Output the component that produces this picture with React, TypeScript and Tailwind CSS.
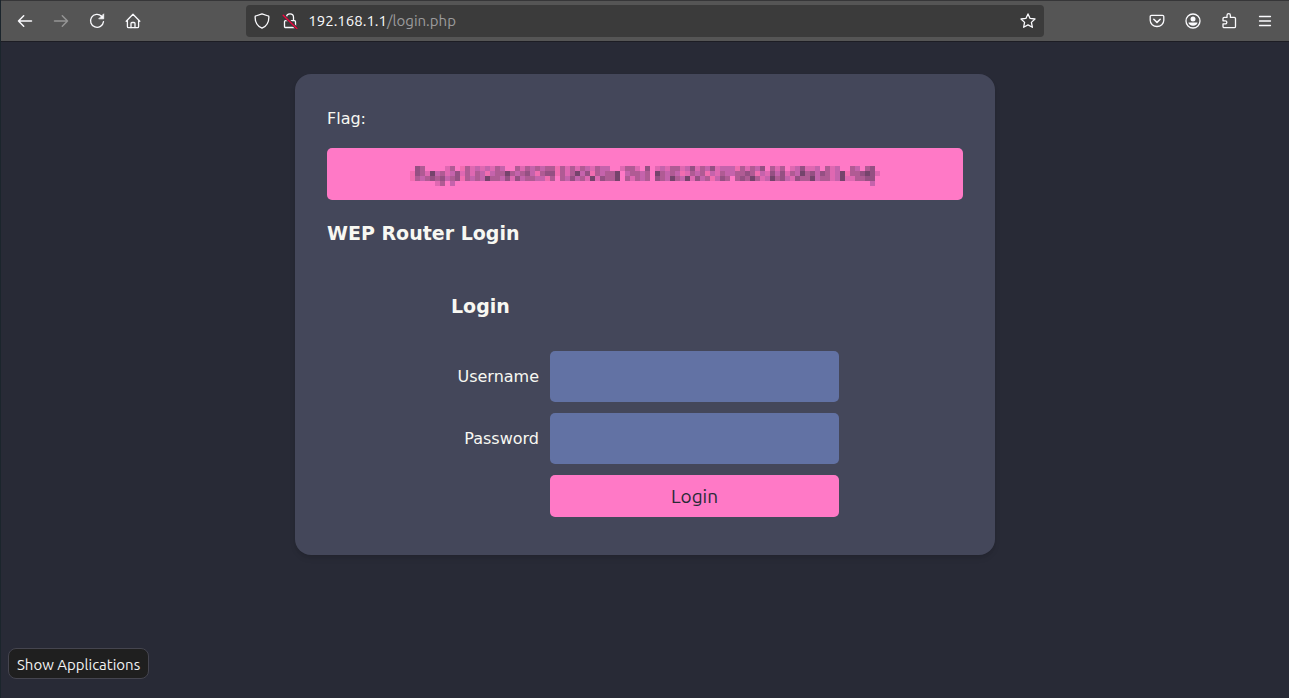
import type { ReactNode } from "react";

function Icon({ children, className = "" }: { children: ReactNode; className?: string }) {
  return (
    <svg
      viewBox="0 0 16 16"
      className={`size-4 shrink-0 ${className}`}
      fill="none"
      stroke="currentColor"
      strokeWidth="1.3"
      strokeLinecap="round"
      strokeLinejoin="round"
      aria-hidden="true"
    >
      {children}
    </svg>
  );
}

function ToolButton({ label, disabled, children }: { label: string; disabled?: boolean; children: ReactNode }) {
  return (
    <button
      type="button"
      aria-label={label}
      disabled={disabled}
      className="flex h-8 w-9 items-center justify-center text-[#fbfbfe] disabled:text-[#959595]"
    >
      {children}
    </button>
  );
}

function Toolbar() {
  return (
    <header className="flex h-[42px] items-center border-t border-b border-t-[#363638] border-b-[#1d1d24] bg-[#555555] px-[6px]">
      <nav className="flex flex-1" aria-label="Navigation">
        <ToolButton label="Back">
          <Icon><path d="M14.5 8H1.5M6.7 2.8 1.5 8l5.2 5.2" strokeWidth="1.5" /></Icon>
        </ToolButton>
        <ToolButton label="Forward" disabled>
          <Icon><path d="M1.5 8h13M9.3 2.8 14.5 8l-5.2 5.2" strokeWidth="1.5" /></Icon>
        </ToolButton>
        <ToolButton label="Reload">
          <Icon>
            <path d="M12.6 3.2A6.5 6.5 0 1 0 14.5 8.6" />
            <path d="M14.7 1.2v4.6h-4.6z" fill="currentColor" strokeWidth="0.8" />
          </Icon>
        </ToolButton>
        <ToolButton label="Home">
          <Icon>
            <path d="M1.2 8.2 8 1.3l6.8 6.9M2.4 7.3v6.2c0 .7.5 1.2 1.2 1.2h8.800c.7 0 1.200-.5 1.200-1.200V7.300" />
            <path d="M6 14.500v-4c0-.6.4-1 1-1h2c.6 0 1 .4 1 1v4" />
          </Icon>
        </ToolButton>
      </nav>
      <div className="flex h-8 w-[62.5%] items-center rounded bg-[#3b3b3b] px-2 text-[#fbfbfe]">
        <Icon>
          <path d="M8 .9 14.3 3c.4.1.6.5.6.9 0 5.4-2.2 9.2-6.9 11.2C3.3 13.1 1.1 9.3 1.1 3.9c0-.4.2-.8.6-.9z" />
        </Icon>
        <Icon className="mr-[10px] ml-3">
          <path d="M4.500 4.200a3.500 3.300 0 0 1 7 0V7M3.600 7.600h8.800c.6 0 1.100.5 1.100 1.100v4.700c0 .6-.5 1.100-1.100 1.100H3.600c-.6 0-1.100-.5-1.100-1.100V8.700c0-.6.5-1.100 1.100-1.100z" />
          <path d="M1.200 2.200 14.800 15.400" stroke="#3b3b3b" strokeWidth="3" />
          <path d="M1.200 2.200 14.800 15.400" stroke="#f0043f" strokeWidth="1.4" />
        </Icon>
        <div className="flex-1 font-['Ubuntu','Noto_Sans',sans-serif] text-[15px] leading-6">
          192.168.1.1<span className="text-[#9b9b9d]">/login.php</span>
        </div>
        <button type="button" aria-label="Bookmark this page">
          <Icon>
            <path d="m8 .9 2.100 4.500 4.900.6-3.600 3.400 1 4.900L8 11.900l-4.400 2.400 1-4.900L1 6l4.900-.6z" />
          </Icon>
        </button>
      </div>
      <div className="flex flex-1 justify-end">
        <ToolButton label="Save to Pocket">
          <Icon>
            <path d="M2.500 2.300h11c.7 0 1.300.5 1.300 1.200v3.700a6.800 6.300 0 0 1-13.600 0V3.500c0-.7.600-1.200 1.300-1.200z" />
            <path d="M4.800 6.300 8 9.400l3.200-3.100" strokeWidth="1.500" />
          </Icon>
        </ToolButton>
        <ToolButton label="Account">
          <Icon>
            <circle cx="8" cy="8" r="7" />
            <circle cx="8" cy="6" r="2.500" fill="currentColor" stroke="none" />
            <path d="M3.500 9.500h9c0 1.800-2 3.300-4.500 3.300s-4.500-1.500-4.500-3.300z" fill="currentColor" stroke="none" />
          </Icon>
        </ToolButton>
        <ToolButton label="Extensions">
          <Icon>
            <path d="M6 4.400V2.400a1.700 1.700 0 0 1 3.400 0v2h3.900c.7 0 1.200.5 1.200 1.200v7.900c0 .7-.5 1.200-1.200 1.200H3.200c-.7 0-1.200-.5-1.200-1.200v-2.600h2.300a1.500 1.500 0 0 0 0-3.100H2V5.600c0-.7.500-1.200 1.200-1.200z" />
          </Icon>
        </ToolButton>
        <ToolButton label="Open application menu">
          <Icon><path d="M2.500 3.500h11M2.500 8h11M2.500 12.500h11" /></Icon>
        </ToolButton>
      </div>
    </header>
  );
}

const shades: Record<string, string> = {
  a: "#f16db1",
  b: "#df68b2",
  c: "#c563ac",
  d: "#b05b94",
  e: "#955083",
  f: "#75446c",
};

// Redacted value, one letter per mosaic cell.
const mosaic = [
  ".ed....bd.adbcbcbdc..dbdcdcddadbdbdcbdcc..bddb.e.bcbddbcebdcebcccadbdce.dbd.bcebbc.dbc..dc.de...",
  "aedbfcdbcebdbdcacddfdcdecadeeadbdfceadcddf.cddcd.fdcdcabdcdacbdccddedacbecebdcfdecedbcfaddefeb..",
  "adcdedecdeadcdcfddcebecddccad.dcecdbfbeddf.dbdcd.edcfdcfbecdaced.dedfdbcfdecbeddfcddbcfbbddee...",
  ".....bd.c...................................................................................c...",
];

function RedactedFlag() {
  return (
    <svg viewBox="0 0 96 4" className="h-5 w-[480px] max-w-full" shapeRendering="crispEdges" role="img" aria-label="Redacted flag">
      {mosaic.flatMap((row, y) =>
        [...row].map((cell, x) =>
          cell === "." ? null : <rect key={`${x}-${y}`} x={x} y={y} width="1" height="1" fill={shades[cell]} />
        )
      )}
    </svg>
  );
}

function Field({ id, label, type }: { id: string; label: string; type: string }) {
  return (
    <>
      <label htmlFor={id} className="self-center text-right">{label}</label>
      <input id={id} type={type} className="h-[51px] w-full rounded-[5px] bg-[#6272a4] px-4 outline-none" />
    </>
  );
}

export default function App() {
  return (
    <div className="flex min-h-screen flex-col border-l border-[#1b252c] bg-[#282a36] font-['DejaVu_Sans',sans-serif] text-base text-[#f8f8f2]">
      <Toolbar />
      <main className="mx-auto my-8 w-full max-w-[700px] rounded-2xl bg-[#44475a] px-8 pt-8 pb-[38px] shadow-md">
        <p className="leading-[26px]">Flag:</p>
        <div className="mt-4 flex h-[52px] items-center justify-center rounded-[5px] bg-[#ff79c6] pt-1 pl-[10px]">
          <RedactedFlag />
        </div>
        <h1 className="mt-[21px] text-[19px] leading-6 font-bold">WEP Router Login</h1>
        <form className="mx-auto mt-[49px] w-full max-w-[388px]" onSubmit={(event) => event.preventDefault()}>
          <h2 className="text-[19px] leading-6 font-bold">Login</h2>
          <div className="mt-[33px] grid grid-cols-[88px_1fr] gap-[11px]">
            <Field id="username" label="Username" type="text" />
            <Field id="password" label="Password" type="password" />
            <button
              type="submit"
              className="col-start-2 h-[42px] rounded-[5px] bg-[#ff79c6] font-['Ubuntu','Noto_Sans',sans-serif] text-[19px] leading-6 text-[#282a36]"
            >
              Login
            </button>
          </div>
        </form>
      </main>
      <div
        role="tooltip"
        className="fixed bottom-[19px] left-2 rounded-lg border border-[#45454f] bg-[#1f1f1f] px-2 pt-[5px] pb-[2px] font-['Ubuntu','Noto_Sans',sans-serif] text-[15px] leading-[22px] text-[#f2f2f2]"
      >
        Show Applications
      </div>
    </div>
  );
}
